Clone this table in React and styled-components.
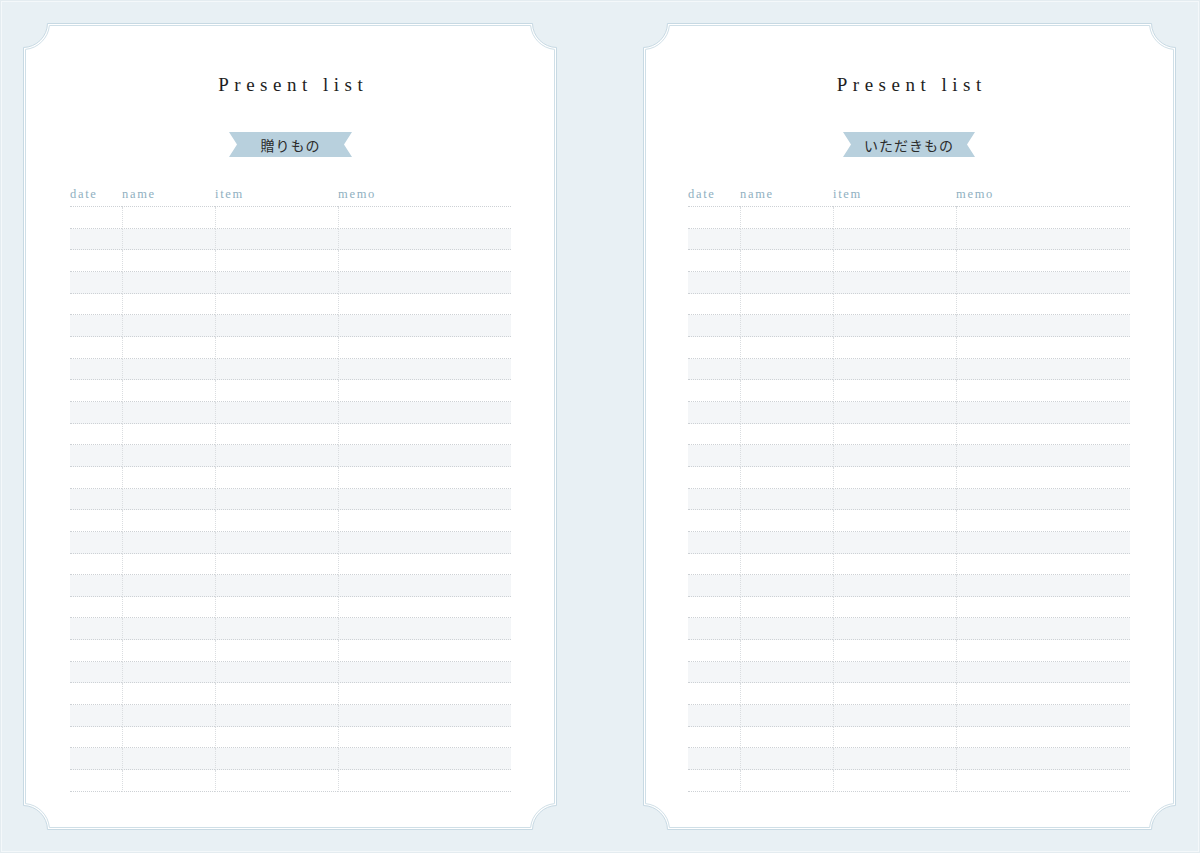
// Present list spread
import React from 'react';
import styled, { createGlobalStyle } from 'styled-components';

const GlobalStyle = createGlobalStyle`
	html, body {
		margin: 0;
		padding: 0;
		background: #e8f0f4;
	}
	* {
		box-sizing: border-box;
	}
`;

const ROW_COUNT = 27;
const CARD_HEIGHT = 807;
const CORNER = 24;

const COLUMNS = [
	{ id: 'date', title: 'date' },
	{ id: 'name', title: 'name' },
	{ id: 'item', title: 'item' },
	{ id: 'memo', title: 'memo' },
];

const Page = styled.div`
	width: 1200px;
	height: 853px;
	display: flex;
	gap: 86px;
	padding: 23px 24px 23px 23px;
	background: #e8f0f4;
	box-shadow: inset 0 0 0 1px #e4ecf0, inset 0 0 0 2px #f4f8fa;
`;

const Card = styled.section`
	position: relative;
	width: ${(props) => props.width}px;
	height: ${CARD_HEIGHT}px;
	display: flex;
	flex-direction: column;
	align-items: center;
	padding: 50px 46px 0 ${(props) => props.inset}px;
`;

const FrameSvg = styled.svg`
	position: absolute;
	left: 0;
	top: 0;
	pointer-events: none;
`;

const Content = styled.div`
	position: relative;
	width: 100%;
	display: flex;
	flex-direction: column;
	align-items: center;
`;

const Title = styled.h1`
	margin: 0;
	padding-left: 5.5px;
	font-family: "Liberation Serif", "Times New Roman", serif;
	font-weight: 400;
	font-size: 19px;
	line-height: 24px;
	letter-spacing: 5.5px;
	color: #1e1e1e;
`;

const Ribbon = styled.div`
	margin-top: 35px;
	width: ${(props) => props.width}px;
	height: 25px;
	display: flex;
	align-items: center;
	justify-content: center;
	background: #b8d0dd;
	clip-path: polygon(0 0, 100% 0, calc(100% - 8px) 50%, 100% 100%, 0 100%, 8px 50%);
	font-family: "Noto Sans CJK JP", sans-serif;
	font-size: 14px;
	letter-spacing: 1px;
	color: #2b2b2b;
`;

const Table = styled.div`
	margin-top: 28px;
	width: 100%;
	display: grid;
	grid-template-columns: 52px 93px 123px 1fr;
`;

const HeadCell = styled.div`
	height: 22px;
	display: flex;
	align-items: flex-end;
	padding-bottom: 5px;
	border-bottom: 1px dotted #cdd1d5;
	font-family: "Liberation Serif", "Times New Roman", serif;
	font-size: 12.5px;
	line-height: 14px;
	letter-spacing: 1.7px;
	color: #8fb0c1;
`;

const Cell = styled.div`
	height: ${585 / ROW_COUNT}px;
	border-bottom: 1px dotted #cdd1d5;
	border-left: ${(props) => (props.first ? 'none' : '1px dotted #dadde0')};
	background: ${(props) => (props.shaded ? '#f4f6f8' : '#fff')};
`;

function framePath(w, h, d) {
	const R = CORNER + d;
	const a = Math.sqrt(R * R - d * d);
	return [
		`M ${a} ${d}`,
		`L ${w - a} ${d}`,
		`A ${R} ${R} 0 0 0 ${w - d} ${a}`,
		`L ${w - d} ${h - a}`,
		`A ${R} ${R} 0 0 0 ${w - a} ${h - d}`,
		`L ${a} ${h - d}`,
		`A ${R} ${R} 0 0 0 ${d} ${h - a}`,
		`L ${d} ${a}`,
		`A ${R} ${R} 0 0 0 ${a} ${d}`,
		'Z',
	].join(' ');
}

const Frame = ({ w, h }) => (
	<FrameSvg width={w} height={h} viewBox={`0 0 ${w} ${h}`}>
		<path d={framePath(w, h, 0.5)} fill="#fff" stroke="#c7d9e3" strokeWidth="1" />
		<path d={framePath(w, h, 2.5)} fill="none" stroke="#cfdfe7" strokeWidth="1" />
	</FrameSvg>
);

const ListPage = ({ width, inset, label, ribbonWidth }) => {
	const rows = Array.from({ length: ROW_COUNT }, (_, i) => i);

	return (
		<Card width={width} inset={inset}>
			<Frame w={width} h={CARD_HEIGHT} />
			<Content>
				<Title>Present list</Title>
				<Ribbon width={ribbonWidth}>{label}</Ribbon>
				<Table>
					{COLUMNS.map((col) => (
						<HeadCell key={col.id}>{col.title}</HeadCell>
					))}
					{rows.map((r) => COLUMNS.map((col, ci) => (
						<Cell
							key={`${r}-${col.id}`}
							first={ci === 0}
							shaded={r % 2 === 1}
						/>
					)))}
				</Table>
			</Content>
		</Card>
	);
};

export default function App() {
	return (
		<>
			<GlobalStyle />
			<Page>
				<ListPage width={534} inset={47} label="贈りもの" ribbonWidth={123} />
				<ListPage width={533} inset={45} label="いただきもの" ribbonWidth={132} />
			</Page>
		</>
	);
}
